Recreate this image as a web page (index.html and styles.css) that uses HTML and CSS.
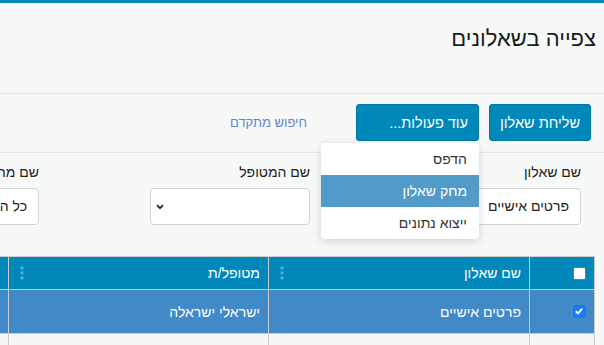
FILE: index.html
```html
<!DOCTYPE HTML><html dir="rtl" lang="he">
<head>
  <title>צפייה בשאלונים</title>
  <meta name="viewport" content="width=device-width, initial-scale=1">
  <meta content="text/html; charset=utf-8" http-equiv="Content-Type" />
  <link rel="stylesheet" href="styles.css">
</head>

<body>
  <div class="topbar"></div>
  <div class="page">
    <div class="header">
      <h1>צפייה בשאלונים</h1>
    </div>

    <div class="toolbar">
      <button class="button button-send">שליחת שאלון</button>
      <div class="dropdown">
        <button class="button button-more">עוד פעולות...</button>
        <ul class="menu">
          <li>הדפס</li>
          <li class="active">מחק שאלון</li>
          <li>ייצוא נתונים</li>
        </ul>
      </div>
      <a href="#" class="link">חיפוש מתקדם</a>
    </div>

    <div class="filters">
      <div class="field">
        <label>שם שאלון</label>
        <div class="input">פרטים אישיים</div>
      </div>
      <div class="field">
        <label>שם המטופל</label>
        <div class="input select">
          <svg class="chevron" width="8" height="6" viewBox="0 0 8 6"><path d="M1 1.2 L4 4.2 L7 1.2" fill="none" stroke="#222" stroke-width="1.8"/></svg>
        </div>
      </div>
      <div class="field">
        <label>שם מחולק</label>
        <div class="input">כל המחלקות</div>
      </div>
    </div>

    <div class="grid-wrap">
      <table class="grid">
        <tr class="head">
          <th class="col-check"><span class="check"></span></th>
          <th class="col-name"><div class="th-in"><span>שם שאלון</span><svg class="dots" width="4" height="14" viewBox="0 0 4 14"><rect x="0.5" y="0.5" width="3" height="3" rx="1"/><rect x="0.5" y="5.5" width="3" height="3" rx="1"/><rect x="0.5" y="10.5" width="3" height="3" rx="1"/></svg></div></th>
          <th class="col-patient"><div class="th-in"><span>מטופל/ת</span><svg class="dots" width="4" height="14" viewBox="0 0 4 14"><rect x="0.5" y="0.5" width="3" height="3" rx="1"/><rect x="0.5" y="5.5" width="3" height="3" rx="1"/><rect x="0.5" y="10.5" width="3" height="3" rx="1"/></svg></div></th>
          <th class="col-more"><div class="th-in"><span>תאריך</span></div></th>
        </tr>
        <tr class="selected">
          <td><span class="check checked"><svg width="12" height="12" viewBox="0 0 12 12"><path d="M2.8 6.3 L5 8.4 L9.2 3.6" fill="none" stroke="#fff" stroke-width="1.9"/></svg></span></td>
          <td>פרטים אישיים</td>
          <td>ישראלי ישראלה</td>
          <td>01/01/2020</td>
        </tr>
        <tr class="empty">
          <td></td>
          <td></td>
          <td></td>
          <td></td>
        </tr>
      </table>
    </div>
  </div>
</body>

</html>
```

FILE: styles.css
```css
html {
  font-family: "Liberation Sans", Arial, sans-serif;
  background-color: #f7f8f8;
  color: #222;
}
body {
  margin: 0;
  height: 345px;
  overflow: hidden;
}
.topbar {
  height: 3px;
  background-color: #0088bb;
}
.page {
  direction: rtl;
  overflow: hidden;
}
.header {
  padding: 21px 8px 0 0;
  height: 69px;
  border-bottom: 1px solid #e6e8e8;
}
h1 {
  margin: 0;
  font-size: 22px;
  font-weight: normal;
  line-height: 30px;
  color: #1a1a1a;
}
.toolbar {
  display: flex;
  align-items: center;
  gap: 10px;
  padding: 10px 13px 11px 0;
  border-bottom: 1px solid #e6e8e8;
}
.button {
  font-family: inherit;
  font-size: 14.5px;
  height: 37px;
  padding: 0 12px;
  color: #fff;
  background-color: #0088bb;
  border: 1px solid #0079a8;
  border-radius: 3px;
}
.button-send {
  width: 102px;
  padding: 0;
  text-align: center;
}
.button-more {
  width: 123px;
  text-align: right;
  padding-right: 10px;
}
.dropdown {
  position: relative;
}
.menu {
  position: absolute;
  top: 39px;
  right: 0;
  width: 158px;
  margin: 0;
  padding: 0;
  list-style: none;
  background: #fff;
  border-radius: 4px;
  box-shadow: 0 2px 8px rgba(0,0,0,.16);
  z-index: 5;
}
.menu li {
  height: 32px;
  line-height: 32px;
  padding-right: 12px;
  font-size: 14px;
  color: #333;
}
.menu li.active {
  background-color: #529bc9;
  color: #fff;
}
.link {
  margin-right: 39px;
  font-size: 13px;
  color: #5f86cf;
  text-decoration: none;
}
.filters {
  display: flex;
  gap: 111px;
  padding: 10px 23px 0 0;
}
.field {
  flex: 0 0 160px;
}
.field label {
  display: block;
  font-size: 14px;
  line-height: 19px;
  margin-bottom: 6px;
  white-space: nowrap;
}
.input {
  box-sizing: border-box;
  height: 37px;
  line-height: 35px;
  padding: 0 11px;
  font-size: 14px;
  background: #fff;
  border: 1px solid #d2d4d4;
  border-radius: 4px;
  white-space: nowrap;
  overflow: hidden;
}
.select {
  display: flex;
  justify-content: flex-end;
  align-items: center;
  padding-left: 5px;
}
.grid-wrap {
  margin: 31px 9px 0 0;
}
.grid {
  border-collapse: collapse;
  table-layout: fixed;
  width: 820px;
  font-size: 14px;
}
.grid th, .grid td {
  border: 1px solid #c9cccc;
  text-align: right;
  padding: 0 8px;
}
.col-check { width: 48px; }
.col-name { width: 244px; }
.col-patient { width: 243px; }
.head th {
  height: 32px;
  background-color: #0088bb;
  color: #fff;
  font-weight: normal;
}
.th-in {
  display: flex;
  justify-content: space-between;
  align-items: center;
}
.dots {
  fill: #55b0d8;
  margin-left: 3px;
}
.selected td {
  height: 43px;
  background-color: #4189c7;
  color: #fff;
}
.empty td {
  height: 30px;
  background-color: #f5f5f5;
}
.check {
  display: block;
  box-sizing: border-box;
  width: 13px;
  height: 13px;
  background: #fff;
  border: 1px solid #767676;
  border-radius: 2px;
}
.checked {
  background: #1a7cf2;
  border-color: #1a7cf2;
}
.checked svg {
  display: block;
  margin: -1px 0 0 -1px;
}
```
